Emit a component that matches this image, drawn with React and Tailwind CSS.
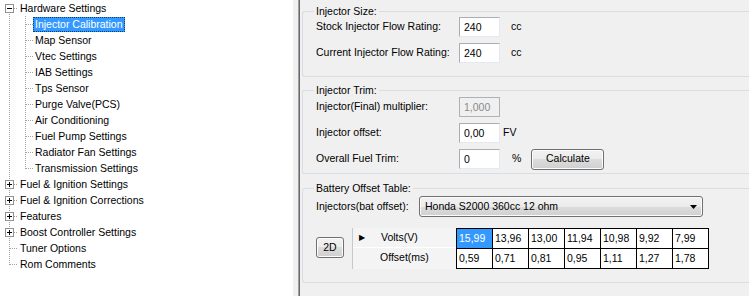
import React from 'react';

const font = { fontFamily: '"Liberation Sans", Arial, sans-serif' };

const tree = [
  { label: 'Hardware Settings', level: 0, box: 'minus', first: true },
  { label: 'Injector Calibration', level: 1, selected: true },
  { label: 'Map Sensor', level: 1 },
  { label: 'Vtec Settings', level: 1 },
  { label: 'IAB Settings', level: 1 },
  { label: 'Tps Sensor', level: 1 },
  { label: 'Purge Valve(PCS)', level: 1 },
  { label: 'Air Conditioning', level: 1 },
  { label: 'Fuel Pump Settings', level: 1 },
  { label: 'Radiator Fan Settings', level: 1 },
  { label: 'Transmission Settings', level: 1, last: true },
  { label: 'Fuel & Ignition Settings', level: 0, box: 'plus' },
  { label: 'Fuel & Ignition Corrections', level: 0, box: 'plus' },
  { label: 'Features', level: 0, box: 'plus' },
  { label: 'Boost Controller Settings', level: 0, box: 'plus' },
  { label: 'Tuner Options', level: 0 },
  { label: 'Rom Comments', level: 0, last: true },
];

const dot = { stroke: '#a0a0a0', strokeWidth: 1, strokeDasharray: '1 1', shapeRendering: 'crispEdges' };

const Gutter = ({ row }) => {
  if (row.level === 0) {
    return (
      <svg width="18" height="16" className="shrink-0">
        <line x1="9.5" y1={row.first ? 8 : 0} x2="9.5" y2={row.last ? 9 : 16} style={dot} />
        <line x1="10" y1="8.5" x2="18" y2="8.5" style={dot} />
        {row.box && (
          <g shapeRendering="crispEdges">
            <rect x="5.5" y="4.5" width="8" height="8" fill="#fff" stroke="#919191" />
            <line x1="7" y1="8.5" x2="12" y2="8.5" stroke="#000" />
            {row.box === 'plus' && <line x1="9.5" y1="6" x2="9.5" y2="11" stroke="#000" />}
          </g>
        )}
      </svg>
    );
  }
  return (
    <svg width="33" height="16" className="shrink-0">
      <line x1="9.5" y1="0" x2="9.5" y2="16" style={dot} />
      <line x1="25.5" y1="0" x2="25.5" y2={row.last ? 9 : 16} style={dot} />
      <line x1="26" y1="8.5" x2="33" y2="8.5" style={dot} />
    </svg>
  );
};

const TreeView = () => (
  <div className="w-[293px] h-full bg-white shrink-0">
    {tree.map((row) => (
      <div key={row.label} className="flex items-center h-4">
        <Gutter row={row} />
        <span
          className={
            row.selected
              ? 'px-[1px] h-[15px] leading-[13px] bg-[#3399ff] text-white border border-dotted border-[#0a3d73]'
              : 'px-[2px] leading-4 text-black'
          }
        >
          {row.label}
        </span>
      </div>
    ))}
  </div>
);

const TextBox = ({ value, disabled }) => (
  <div
    className={
      disabled
        ? 'w-[41px] h-[20px] border border-[#adb2b5] bg-[#f0f0f0] text-[#8a8a8a] pl-[4px] leading-[18px]'
        : 'w-[41px] h-[20px] border border-[#abadb3] border-r-[#e3e9ef] border-b-[#e3e9ef] bg-white pl-[4px] leading-[18px]'
    }
  >
    {value}
  </div>
);

const winButton =
  'border border-[#707070] rounded-[3px] bg-[linear-gradient(#f2f2f2_0%,#ebebeb_50%,#dddddd_50%,#cfcfcf_100%)] shadow-[inset_0_0_0_1px_#fcfcfc]';

const GroupBox = ({ title, className, children }) => (
  <div className={'relative border border-r-0 border-[#d5dfe5] rounded-l-[3px] -mr-2 pl-[13px] ' + className}>
    <span className="absolute left-[11px] -top-[8px] bg-[#f0f0f0] px-[2px] leading-[14px]">{title}</span>
    {children}
  </div>
);

const Row = ({ label, children }) => (
  <div className="flex items-center h-[20px]">
    <span className="w-[143px] shrink-0">{label}</span>
    {children}
  </div>
);

const volts = ['15,99', '13,96', '13,00', '11,94', '10,98', '9,92', '7,99'];
const offsets = ['0,59', '0,71', '0,81', '0,95', '1,11', '1,27', '1,78'];

const Grid = () => (
  <div className="flex border-l border-[#c8c8c8]">
    <div className="w-[103px] bg-[#f4f4f4]">
      <div className="h-[20px] flex items-center border-b border-[#fff]">
        <span className="w-[28px] pl-[6px] text-[8px] leading-none">&#9654;</span>
        <span>Volts(V)</span>
      </div>
      <div className="h-[20px] flex items-center">
        <span className="w-[27px]" />
        <span>Offset(ms)</span>
      </div>
    </div>
    <div className="border-t border-l border-black">
      {[volts, offsets].map((r, ri) => (
        <div key={ri} className="flex">
          {r.map((v, i) => (
            <div
              key={i}
              className={
                'w-[36px] h-[20px] border-r border-b border-black pl-[2px] leading-[19px] ' +
                (ri === 0 && i === 0 ? 'bg-[#3399ff] text-white' : 'bg-white')
              }
            >
              {v}
            </div>
          ))}
        </div>
      ))}
    </div>
  </div>
);

export default function App() {
  return (
    <div className="w-[749px] h-[296px] flex overflow-hidden text-[10.5px] text-black" style={font}>
      <TreeView />
      <div className="w-[5px] bg-[#f0f0f0] shrink-0" />
      <div className="w-[1px] bg-[#a0a0a0] shrink-0" />
      <div className="w-[1px] bg-[#696969] shrink-0" />
      <div className="flex-1 bg-[#f0f0f0] pl-[2px] pt-[11px] overflow-hidden">
        <GroupBox title="Injector Size:" className="h-[66px] pt-[5px] flex flex-col gap-[6px]">
          <Row label="Stock Injector Flow Rating:">
            <TextBox value="240" />
            <span className="ml-[11px]">cc</span>
          </Row>
          <Row label="Current Injector Flow Rating:">
            <TextBox value="240" />
            <span className="ml-[11px]">cc</span>
          </Row>
        </GroupBox>

        <GroupBox title="Injector Trim:" className="mt-[13px] h-[84px] pt-[6px] flex flex-col gap-[6px]">
          <Row label="Injector(Final) multiplier:">
            <TextBox value="1,000" disabled />
          </Row>
          <Row label="Injector offset:">
            <TextBox value="0,00" />
            <span className="ml-[3px]">FV</span>
          </Row>
          <Row label="Overall Fuel Trim:">
            <TextBox value="0" />
            <span className="ml-[12px]">%</span>
            <button className={'ml-[10px] w-[73px] h-[21px] ' + winButton}>Calculate</button>
          </Row>
        </GroupBox>

        <GroupBox title="Battery Offset Table:" className="mt-[14px] h-[95px] pt-[7px]">
          <div className="flex items-center h-[21px]">
            <span className="w-[103px] shrink-0">Injectors(bat offset):</span>
            <div className={'w-[284px] h-[21px] flex items-center justify-between px-[5px] ' + winButton}>
              <span>Honda S2000 360cc 12 ohm</span>
              <svg width="7" height="4" viewBox="0 0 7 4">
                <path d="M0 0h7L3.5 4z" fill="#000" />
              </svg>
            </div>
          </div>
          <div className="flex mt-[11px]">
            <div className="pt-[9px] pr-[8px]">
              <button className={'w-[28px] h-[21px] ' + winButton}>2D</button>
            </div>
            <Grid />
          </div>
        </GroupBox>
      </div>
    </div>
  );
}
